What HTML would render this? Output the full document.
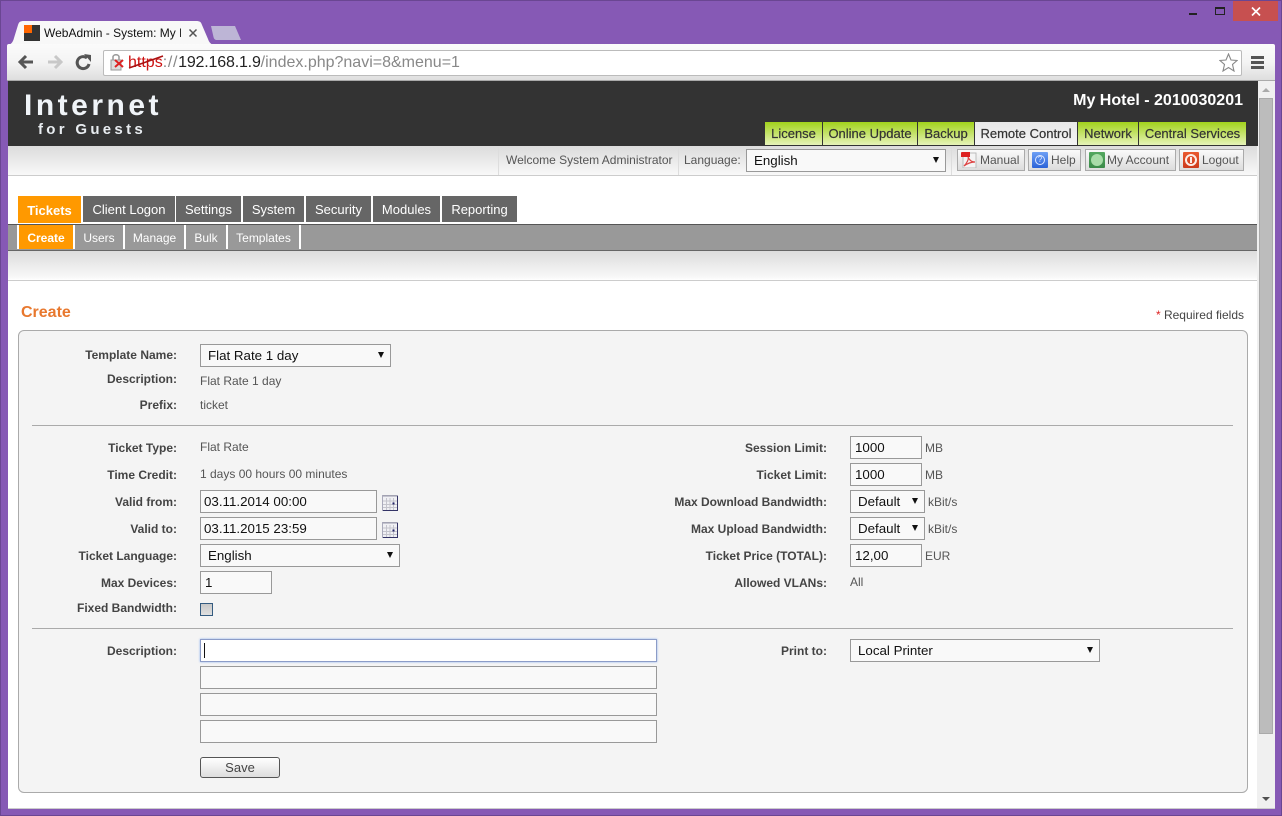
<!DOCTYPE html>
<html><head><meta charset="utf-8"><style>
html,body{margin:0;padding:0}
body{width:1282px;height:816px;position:relative;overflow:hidden;background:#8659b5;font-family:"Liberation Sans",Arial,sans-serif;font-size:12px;color:#444}
div,span,svg{position:absolute;box-sizing:border-box}
.t{white-space:nowrap;line-height:16px}
.l{font-weight:bold;font-size:12px;color:#444;text-align:right;width:170px;white-space:nowrap;line-height:16px}
.l1{left:7px}.l2{left:657px}
.v{font-size:12px;color:#555;white-space:nowrap;line-height:16px}
.in{background:#f9f9f9;border:1px solid #999;font-size:13.33px;color:#111;line-height:21px;padding-left:4px;height:23px;white-space:nowrap}
.sel{background:#f9f9f9;border:1px solid #999;font-size:13.33px;color:#111;line-height:21px;padding-left:7px;height:23px;white-space:nowrap}
.sel i{position:absolute;right:6px;top:7px;width:0;height:0;border-left:3px solid transparent;border-right:3px solid transparent;border-top:6px solid #111}
.gt{top:122px;height:23px;background:linear-gradient(#a2d21c,#e6f3b8);font-size:13px;color:#333;text-align:center;line-height:24px;white-space:nowrap;-webkit-text-stroke:.2px #333}
.mt{top:196px;height:26px;background:#666;color:#fff;font-size:13px;text-align:center;line-height:27px;white-space:nowrap}
.st{top:225px;height:24px;background:#999;color:#fff;font-size:12px;text-align:center;line-height:26px;white-space:nowrap}
.sd{top:225px;width:2px;height:24px;background:#fff}
.b{top:149px;height:22px;border:1px solid #aaa;background:linear-gradient(#fafafa,#dcdcdc);font-size:12px;color:#555;line-height:21px;padding-left:22px;white-space:nowrap}
.ic{left:3px;top:2px;width:16px;height:16px;border-radius:1px}
.hr{left:32px;width:1201px;height:1px;background:#aaa}
</style></head><body>

<div style="left:0;top:0;width:1282px;height:1px;background:#6a4692"></div>
<div style="left:0;top:0;width:1px;height:816px;background:#6a4692"></div>
<div style="left:1281px;top:0;width:1px;height:816px;background:#6a4692"></div>
<div style="left:0;top:815px;width:1282px;height:1px;background:#6a4692"></div>

<!-- window controls -->
<div style="left:1189px;top:13px;width:8px;height:2px;background:#222"></div>
<div style="left:1215px;top:7px;width:10px;height:8px;border:1px solid #222;border-top-width:2px"></div>
<div style="left:1233px;top:1px;width:45px;height:20px;background:#c75050"></div>
<svg style="left:1251px;top:7px" width="10" height="9" viewBox="0 0 10 9"><path d="M1 .5L9 8.500M9 .5L1 8.500" stroke="#fff" stroke-width="1.700"/></svg>

<!-- tabs -->
<svg style="left:6px;top:20px" width="240" height="26" viewBox="0 0 240 26">
<path d="M1 25C5 25 7 22 8 18L12 5C13 2 14 1 18 1H190C194 1 195 2 196 5L202 19C203 22 205 25 209 25Z" fill="#f8f8f8"/>
<path d="M205 6H229L235 20H211C209 20 208 19 207.500 17Z" fill="#bdb5d6"/>
</svg>
<div style="left:24px;top:25px;width:16px;height:16px;background:#333"></div>
<div style="left:24px;top:25px;width:8px;height:8px;background:#f60"></div>
<div class="t" style="left:44px;top:25px;font-size:12px;color:#111;width:137px;overflow:hidden">WebAdmin - System: My Hotel</div>
<svg style="left:188px;top:28px" width="10" height="10" viewBox="0 0 10 10"><path d="M1.500 1.500L8.500 8.500M8.500 1.500L1.500 8.500" stroke="#555" stroke-width="1.500"/></svg>

<!-- toolbar -->
<div style="left:7px;top:44px;width:1268px;height:37px;background:linear-gradient(#fbfbfb,#f4f4f4 50%,#dedede);border-bottom:1px solid #aaa;border-top-left-radius:2px;border-top-right-radius:2px"></div>
<svg style="left:16px;top:52px" width="80" height="22" viewBox="0 0 80 22">
<path d="M17 10H5M10 4L4 10L10 16" stroke="#555" stroke-width="3" fill="none"/>
<path d="M32 10H44M39 4L45 10L39 16" stroke="#c8c8c8" stroke-width="3" fill="none"/>
<path d="M73 12A6 6 0 1 1 71 6" stroke="#555" stroke-width="3" fill="none"/><path d="M68 2L75 3V10Z" fill="#555"/>
</svg>
<div style="left:103px;top:50px;width:1139px;height:26px;background:#fff;border:1px solid #bbb;border-radius:2px"></div>
<svg style="left:108px;top:52px" width="60" height="22" viewBox="0 0 60 22">
<rect x="3" y="8" width="10" height="10" fill="#ddd" stroke="#999"/><path d="M5 8V5C5 2 11 2 11 5V8" stroke="#999" stroke-width="1.500" fill="none"/>
<path d="M7 8L15 15M15 8L7 15" stroke="#d22" stroke-width="2"/>
</svg>
<div class="t" style="left:128px;top:54px;font-size:16px;line-height:18px;color:#888"><span style="position:static;color:#c11">https</span><span style="position:static;letter-spacing:.7px">://</span><span style="position:static;color:#222;letter-spacing:-.18px">192.168.1.9</span>/index.php?navi=8&amp;menu=1</div>
<svg style="left:128px;top:54px" width="38" height="16" viewBox="0 0 38 16"><path d="M1 14L35 2" stroke="#a11" stroke-width="1.500"/></svg>
<svg style="left:1219px;top:53px" width="19" height="19" viewBox="0 0 19 19"><path d="M9.500 1L12 7L18 7.500L13.500 11.500L15 18L9.500 14.500L4 18L5.500 11.500L1 7.500L7 7Z" fill="#fff" stroke="#888" stroke-width="1.100"/></svg>
<div style="left:1251px;top:56px;width:13px;height:3px;background:#555"></div>
<div style="left:1251px;top:61px;width:13px;height:3px;background:#555"></div>
<div style="left:1251px;top:66px;width:13px;height:3px;background:#555"></div>

<!-- page -->
<div style="left:8px;top:81px;width:1267px;height:728px;background:#fff;border-bottom:1px solid #ccc"></div>

<!-- scrollbar -->
<div style="left:1257px;top:81px;width:18px;height:727px;background:#f0f0f0"></div>
<div style="left:1259px;top:98px;width:14px;height:636px;background:#bcbcbc;border:1px solid #aaa"></div>
<div style="left:1262px;top:88px;width:0;height:0;border-left:4px solid transparent;border-right:4px solid transparent;border-bottom:4px solid #aaa"></div>
<div style="left:1262px;top:797px;width:0;height:0;border-left:4px solid transparent;border-right:4px solid transparent;border-top:4px solid #505050"></div>

<!-- header -->
<div style="left:8px;top:81px;width:1250px;height:65px;background:#333"></div>
<div class="t" style="left:24px;top:89px;font-size:30px;line-height:34px;font-weight:bold;color:#f0f4f8;letter-spacing:3.500px">Internet</div>
<div class="t" style="left:38px;top:122px;font-size:15px;font-weight:bold;color:#e8ecf0;letter-spacing:3.300px">for Guests</div>
<div class="t" style="left:1043px;width:200px;top:93px;text-align:right;font-size:16px;font-weight:bold;color:#fff">My Hotel - 2010030201</div>
<div class="gt" style="left:765px;width:57px">License</div>
<div class="gt" style="left:823px;width:94px">Online Update</div>
<div class="gt" style="left:918px;width:56px">Backup</div>
<div class="gt" style="left:975px;width:102px;background:linear-gradient(#e8e8e8,#f4f4f4)">Remote Control</div>
<div class="gt" style="left:1078px;width:60px">Network</div>
<div class="gt" style="left:1139px;width:107px">Central Services</div>

<!-- user bar -->
<div style="left:8px;top:146px;width:1249px;height:30px;background:linear-gradient(#dcdcdc,#f8f8f8);border-bottom:1px solid #ccc"></div>
<div style="left:498px;top:147px;width:1px;height:28px;background:#ddd"></div>
<div style="left:678px;top:147px;width:1px;height:28px;background:#ddd"></div>
<div style="left:951px;top:147px;width:1px;height:28px;background:#ddd"></div>
<div class="t" style="left:506px;top:152px;font-size:12px;color:#555">Welcome System Administrator</div>
<div class="t" style="left:684px;top:152px;font-size:12px;color:#555">Language:</div>
<div class="sel" style="left:746px;top:149px;width:200px">English<i></i></div>
<div class="b" style="left:957px;width:68px"><svg class="ic" width="16" height="16" viewBox="0 0 16 16"><rect x="2" y="1" width="13" height="15" fill="#f4f4f4" stroke="#bbb"/><rect x="0" y="0" width="9" height="5" fill="#d22"/><path d="M3 14C6 11 8 7 7 5C9 9 11 10 14 10C10 10 7 11 3 14Z" fill="none" stroke="#d44" stroke-width="1.200"/></svg>Manual</div>
<div class="b" style="left:1028px;width:53px"><div class="ic" style="background:linear-gradient(#6ea0f5,#2a62d8)"><div style="left:3px;top:3px;width:10px;height:10px;border:1.500px solid #dde8ff;border-radius:50%"></div><div style="left:3px;top:3px;width:10px;height:10px;font-size:8px;line-height:10px;text-align:center;color:#dde8ff">?</div></div>Help</div>
<div class="b" style="left:1085px;width:91px;padding-left:21px"><div class="ic" style="background:linear-gradient(#54a860,#3a8a48)"><div style="left:2px;top:2px;width:12px;height:12px;background:#a8dca8;border-radius:50%"></div></div>My Account</div>
<div class="b" style="left:1179px;width:65px"><div class="ic" style="background:linear-gradient(#ea5a30,#cc3a1c)"><div style="left:2px;top:2px;width:12px;height:12px;border:2px solid #fdeee8;border-radius:50%"></div><div style="left:7px;top:5px;width:2px;height:6px;background:#fdeee8"></div></div>Logout</div>

<!-- main nav -->
<div class="mt" style="left:18px;width:63px;height:27px;background:#f90;font-weight:bold;line-height:29px">Tickets</div>
<div class="mt" style="left:83px;width:92px">Client Logon</div>
<div class="mt" style="left:176px;width:65px">Settings</div>
<div class="mt" style="left:243px;width:61px">System</div>
<div class="mt" style="left:306px;width:65px">Security</div>
<div class="mt" style="left:373px;width:67px">Modules</div>
<div class="mt" style="left:442px;width:75px">Reporting</div>
<div style="left:8px;top:224px;width:1249px;height:27px;background:#999;border-top:1px solid #555;border-bottom:1px solid #666"></div>
<div class="sd" style="left:17px"></div>
<div class="st" style="left:19px;width:54px;background:#f90;font-weight:bold">Create</div>
<div class="sd" style="left:73px"></div>
<div class="st" style="left:75px;width:48px">Users</div>
<div class="sd" style="left:123px"></div>
<div class="st" style="left:125px;width:59px">Manage</div>
<div class="sd" style="left:184px"></div>
<div class="st" style="left:186px;width:40px">Bulk</div>
<div class="sd" style="left:226px"></div>
<div class="st" style="left:228px;width:71px">Templates</div>
<div class="sd" style="left:299px"></div>
<div style="left:8px;top:251px;width:1249px;height:30px;background:linear-gradient(#dcdcdc,#f8f8f8 90%,#fff);border-bottom:1px solid #ccc"></div>

<div class="t" style="left:21px;top:304px;font-size:16px;line-height:18px;font-weight:bold;color:#e8782e">Create</div>
<div class="t" style="left:1044px;width:200px;top:307px;text-align:right;font-size:12px;color:#444"><span style="position:static;color:#d22">*</span> Required fields</div>

<!-- panel -->
<div style="left:18px;top:330px;width:1230px;height:463px;background:#f4f4f4;border:1px solid #aaa;border-radius:6px"></div>

<div class="l l1" style="top:347px">Template Name:</div>
<div class="sel" style="left:200px;top:344px;width:191px">Flat Rate 1 day<i></i></div>
<div class="l l1" style="top:371px">Description:</div>
<div class="v" style="left:200px;top:373px">Flat Rate 1 day</div>
<div class="l l1" style="top:397px">Prefix:</div>
<div class="v" style="left:200px;top:397px">ticket</div>
<div class="hr" style="top:425px"></div>

<div class="l l1" style="top:440px">Ticket Type:</div>
<div class="v" style="left:200px;top:439px">Flat Rate</div>
<div class="l l1" style="top:467px">Time Credit:</div>
<div class="v" style="left:200px;top:466px">1 days 00 hours 00 minutes</div>
<div class="l l1" style="top:494px">Valid from:</div>
<div class="in" style="left:200px;top:490px;width:177px;padding-left:3px">03.11.2014 00:00</div>
<svg style="left:382px;top:495px" width="16" height="16" viewBox="0 0 16 16"><rect x=".5" y=".5" width="15" height="15" fill="#f0f0f4" stroke="#aab"/><path d="M1 1H15" stroke="#99a"/><path d="M4.500 3V15M8 3V15M11.500 3V15M1 6H15M1 9.500H15M1 12.500H15" stroke="#c4c4cc"/><path d="M15.500 1V15.500H1" stroke="#336" fill="none"/><rect x="10.500" y="7.500" width="2" height="2" fill="#226"/></svg>
<div class="l l1" style="top:521px">Valid to:</div>
<div class="in" style="left:200px;top:517px;width:177px;padding-left:3px">03.11.2015 23:59</div>
<svg style="left:382px;top:522px" width="16" height="16" viewBox="0 0 16 16"><rect x=".5" y=".5" width="15" height="15" fill="#f0f0f4" stroke="#aab"/><path d="M1 1H15" stroke="#99a"/><path d="M4.500 3V15M8 3V15M11.500 3V15M1 6H15M1 9.500H15M1 12.500H15" stroke="#c4c4cc"/><path d="M15.500 1V15.500H1" stroke="#336" fill="none"/><rect x="10.500" y="7.500" width="2" height="2" fill="#226"/></svg>
<div class="l l1" style="top:548px">Ticket Language:</div>
<div class="sel" style="left:200px;top:544px;width:200px">English<i></i></div>
<div class="l l1" style="top:575px">Max Devices:</div>
<div class="in" style="left:200px;top:571px;width:72px">1</div>
<div class="l l1" style="top:600px">Fixed Bandwidth:</div>
<div style="left:200px;top:603px;width:13px;height:13px;background:linear-gradient(#c8c8c8,#e0e0e0);border:1px solid #345b80"></div>
<div class="hr" style="top:628px"></div>

<div class="l l2" style="top:440px">Session Limit:</div>
<div class="in" style="left:850px;top:436px;width:72px">1000</div>
<div class="v" style="left:925px;top:440px">MB</div>
<div class="l l2" style="top:467px">Ticket Limit:</div>
<div class="in" style="left:850px;top:463px;width:72px">1000</div>
<div class="v" style="left:925px;top:467px">MB</div>
<div class="l l2" style="top:494px">Max Download Bandwidth:</div>
<div class="sel" style="left:850px;top:490px;width:75px">Default<i></i></div>
<div class="v" style="left:928px;top:494px">kBit/s</div>
<div class="l l2" style="top:521px">Max Upload Bandwidth:</div>
<div class="sel" style="left:850px;top:517px;width:75px">Default<i></i></div>
<div class="v" style="left:928px;top:521px">kBit/s</div>
<div class="l l2" style="top:548px">Ticket Price (TOTAL):</div>
<div class="in" style="left:850px;top:544px;width:72px">12,00</div>
<div class="v" style="left:925px;top:548px">EUR</div>
<div class="l l2" style="top:575px">Allowed VLANs:</div>
<div class="v" style="left:850px;top:574px">All</div>

<div class="l l1" style="top:643px">Description:</div>
<div class="in" style="left:200px;top:639px;width:457px;background:#fff;border-color:#8c9cc8;box-shadow:0 0 2px #8ab0f0"></div>
<div style="left:204px;top:643px;width:1px;height:15px;background:#111"></div>
<div class="in" style="left:200px;top:666px;width:457px"></div>
<div class="in" style="left:200px;top:693px;width:457px"></div>
<div class="in" style="left:200px;top:720px;width:457px"></div>
<div style="left:200px;top:757px;width:80px;height:21px;border:1px solid #555;border-radius:3px;background:linear-gradient(#fff,#ddd);font-size:13px;color:#444;text-align:center;line-height:20px">Save</div>

<div class="l l2" style="top:643px">Print to:</div>
<div class="sel" style="left:850px;top:639px;width:250px">Local Printer<i></i></div>
</body></html>
